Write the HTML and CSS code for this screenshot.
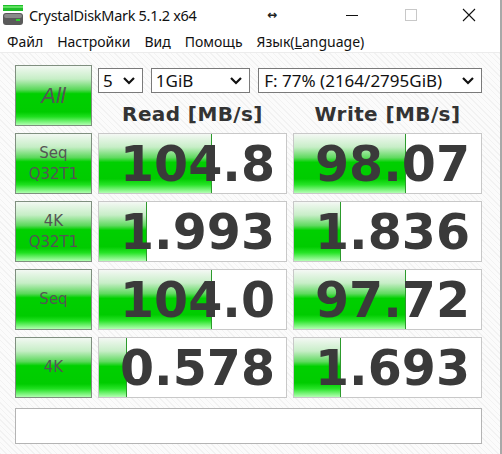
FILE: index.html
```html
<!DOCTYPE html>
<html lang="ru">

<head>
    <meta charset="UTF-8">
    <title>CrystalDiskMark 5.1.2 x64</title>
    <link rel="stylesheet" href="styles.css">
</head>

<body>
    <div class="window">
        <div class="titlebar">
            <svg class="app-icon" width="22" height="22" viewBox="0 0 22 22">
                <rect x="1" y="1" width="20" height="6" fill="#1fbf2a"/>
                <rect x="1" y="2" width="20" height="2" fill="#5fe060"/>
                <rect x="1" y="9" width="20" height="12" rx="3" fill="#5a5a5a"/>
                <rect x="2" y="10" width="18" height="4" rx="2" fill="#8a8a8a"/>
                <rect x="14" y="15" width="4" height="2" fill="#2ed62e"/>
            </svg>
            <span class="title">CrystalDiskMark 5.1.2 x64</span>
            <span class="resize">&#8596;</span>
            <div class="controls">
                <svg width="14" height="14" viewBox="0 0 14 14"><line x1="1" y1="7.5" x2="13" y2="7.5" stroke="#111" stroke-width="1"/></svg>
                <svg width="14" height="14" viewBox="0 0 14 14"><rect x="1.5" y="1.5" width="11" height="11" fill="none" stroke="#c8c8c8" stroke-width="1"/></svg>
                <svg width="14" height="14" viewBox="0 0 14 14"><path d="M1 1 L13 13 M13 1 L1 13" stroke="#111" stroke-width="1.1"/></svg>
            </div>
        </div>

        <div class="menubar">
            <span>Файл</span>
            <span>Настройки</span>
            <span>Вид</span>
            <span>Помощь</span>
            <span>Язык(<u>L</u>anguage)</span>
        </div>

        <div class="main">
            <div class="board">
                <div class="btn btn-all">All</div>
                <div class="top">
                    <div class="selects">
                        <div class="select s-count">5 <svg class="chev" width="14" height="10" viewBox="0 0 14 10"><polyline points="2,2 7,7 12,2" fill="none" stroke="#111" stroke-width="2.2"/></svg></div>
                        <div class="select s-size">1GiB <svg class="chev" width="14" height="10" viewBox="0 0 14 10"><polyline points="2,2 7,7 12,2" fill="none" stroke="#111" stroke-width="2.2"/></svg></div>
                        <div class="select s-drive">F: 77% (2164/2795GiB) <svg class="chev" width="14" height="10" viewBox="0 0 14 10"><polyline points="2,2 7,7 12,2" fill="none" stroke="#111" stroke-width="2.2"/></svg></div>
                    </div>
                    <div class="heads">
                        <div class="head">Read [MB/s]</div>
                        <div class="head">Write [MB/s]</div>
                    </div>
                </div>

                <div class="btn">Seq<br>Q32T1</div>
                <div class="value"><div class="bar" style="width: 112px"></div><span>104.8</span></div>
                <div class="value"><div class="bar" style="width: 111px"></div><span>98.07</span></div>

                <div class="btn">4K<br>Q32T1</div>
                <div class="value"><div class="bar" style="width: 47px"></div><span>1.993</span></div>
                <div class="value"><div class="bar" style="width: 46px"></div><span>1.836</span></div>

                <div class="btn">Seq</div>
                <div class="value"><div class="bar" style="width: 112px"></div><span>104.0</span></div>
                <div class="value"><div class="bar" style="width: 111px"></div><span>97.72</span></div>

                <div class="btn">4K</div>
                <div class="value"><div class="bar" style="width: 27px"></div><span>0.578</span></div>
                <div class="value"><div class="bar" style="width: 46px"></div><span>1.693</span></div>
            </div>

            <div class="comment"></div>
        </div>
    </div>
</body>

</html>
```

FILE: styles.css
```css
body {
    margin: 0;
    padding: 0;
    font-family: "Noto Sans", "Open Sans", sans-serif;
    background-color: #fff;
}

.window {
    width: 500px;
    height: 454px;
    border-right: 2px solid #a8a8a8;
    display: flex;
    flex-direction: column;
    background-color: #fff;
}

.titlebar {
    height: 30px;
    display: flex;
    align-items: center;
    padding-left: 2px;
}

.app-icon {
    margin-right: 5px;
    flex-shrink: 0;
}

.title {
    font-size: 14.5px;
    letter-spacing: -0.3px;
    color: #111;
    width: 238px;
    flex-shrink: 0;
}

.resize {
    display: inline-block;
    width: 10px;
    overflow: visible;
    font-size: 12px;
    color: #222;
    font-family: "DejaVu Sans", sans-serif;
    font-weight: bold;
    flex-shrink: 0;
}

.controls {
    display: flex;
    margin-left: 68px;
    gap: 45px;
}

.controls svg:last-child {
    margin-left: -1px;
}

.menubar {
    height: 22px;
    display: flex;
    align-items: center;
    font-size: 14px;
    color: #111;
    padding-left: 7px;
    border-bottom: 1px solid #ececec;
}

.menubar span {
    margin-right: 14px;
}

.menubar u {
    text-decoration-thickness: 1px;
}

.main {
    flex: 1;
    padding: 12px 0 0 15px;
    background-color: #f6f6f6;
    background-image: repeating-linear-gradient(45deg, #f2f2f2 0, #f2f2f2 1px, #fbfbfb 1px, #fbfbfb 4px);
}

.board {
    display: grid;
    grid-template-columns: 77px 189px 189px;
    grid-template-rows: 61px 61px 61px 61px 61px;
    column-gap: 6px;
    row-gap: 7px;
}

.btn {
    box-sizing: border-box;
    border: 1px solid #7f8f7f;
    background: linear-gradient(to bottom, #f2f8f2 0%, #c6eec6 22%, #5ad85a 40%, #00d000 47%, #00cc00 78%, #20e020 86%, #b0ffb0 100%);
    display: flex;
    align-items: center;
    justify-content: center;
    text-align: center;
    color: #555;
    font-family: "DejaVu Sans", sans-serif;
    font-size: 15px;
    line-height: 21px;
}

.btn-all {
    font-size: 22px;
    font-style: italic;
    font-family: "Liberation Sans", sans-serif;
}

.top {
    grid-column: 2 / 4;
    display: flex;
    flex-direction: column;
}

.selects {
    display: flex;
    gap: 8px;
    margin-top: 3px;
}

.select {
    box-sizing: border-box;
    height: 25px;
    border: 1px solid #7a7a7a;
    background-color: #fff;
    display: flex;
    align-items: center;
    justify-content: space-between;
    padding: 0 6px 0 4px;
    font-size: 17px;
    color: #111;
}

.s-count {
    width: 45px;
}

.s-size {
    width: 100px;
}

.s-drive {
    width: 225px;
    padding-left: 5px;
}

.heads {
    display: grid;
    grid-template-columns: 189px 189px;
    column-gap: 6px;
    margin-top: 9px;
}

.head {
    text-align: center;
    font-family: "DejaVu Sans", sans-serif;
    font-weight: bold;
    font-size: 20px;
    letter-spacing: 0.4px;
    color: #333;
}

.value {
    position: relative;
    box-sizing: border-box;
    border: 1px solid #c8c8c8;
    background-color: #fff;
    display: flex;
    align-items: center;
    justify-content: flex-end;
    padding-right: 11px;
    overflow: hidden;
}

.bar {
    position: absolute;
    top: 0;
    left: 0;
    bottom: 0;
    border-right: 1px solid #2c9a2c;
    background: linear-gradient(to bottom, #f4f8f4 0%, #c8eec8 22%, #60da60 40%, #00d000 48%, #00cc00 76%, #28e428 86%, #b4ffb4 100%);
}

.value span {
    position: relative;
    font-family: "DejaVu Sans", sans-serif;
    font-weight: bold;
    font-size: 49px;
    color: #3a3a3a;
    line-height: 1;
    margin-top: 2px;
}

.comment {
    width: 467px;
    height: 36px;
    box-sizing: border-box;
    margin-top: 10px;
    border: 1px solid #b4b4b4;
    background-color: #fff;
}
```
